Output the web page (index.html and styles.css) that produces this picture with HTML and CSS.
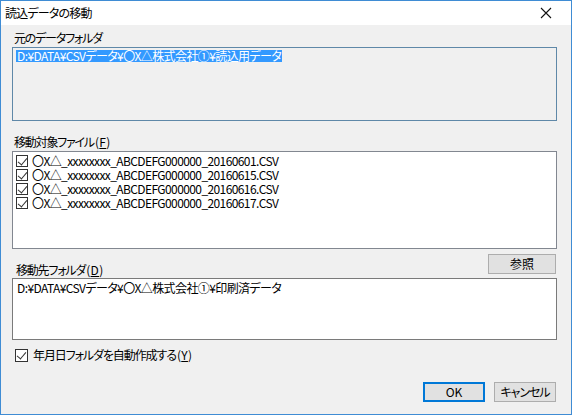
FILE: index.html
```html
<!DOCTYPE html>
<html lang="ja">
<head>
<meta charset="utf-8">
<title>読込データの移動</title>
<link rel="stylesheet" href="styles.css">
</head>
<body>
<div class="window">
  <div class="titlebar">
    <span class="title">読込データの移動</span>
    <span class="close">
      <svg width="12" height="12" viewBox="0 0 12 12"><path d="M1 1 L11 11 M11 1 L1 11" stroke="#111" stroke-width="1.1" fill="none"/></svg>
    </span>
  </div>
  <div class="content">
    <div class="label first">元のデータフォルダ</div>
    <div class="textbox source"><span class="selected">D:¥DATA¥CSVデータ¥〇X△株式会社①¥読込用データ</span></div>

    <div class="label files">移動対象ファイル<span class="key">(<u>F</u>)</span></div>
    <div class="listbox">
      <div class="item"><span class="check"></span><span class="name">〇X△_xxxxxxxx_ABCDEFG000000_20160601.CSV</span></div>
      <div class="item"><span class="check"></span><span class="name">〇X△_xxxxxxxx_ABCDEFG000000_20160615.CSV</span></div>
      <div class="item"><span class="check"></span><span class="name">〇X△_xxxxxxxx_ABCDEFG000000_20160616.CSV</span></div>
      <div class="item"><span class="check"></span><span class="name">〇X△_xxxxxxxx_ABCDEFG000000_20160617.CSV</span></div>
    </div>

    <div class="dest-row">
      <div class="label dest">移動先フォルダ<span class="key">(<u>D</u>)</span></div>
      <div class="button browse">参照</div>
    </div>
    <div class="textbox target">D:¥DATA¥CSVデータ¥〇X△株式会社①¥印刷済データ</div>

    <div class="option"><span class="check"></span><span>年月日フォルダを自動作成する<span class="key">(<u>Y</u>)</span></span></div>

    <div class="actions">
      <div class="button ok">OK</div>
      <div class="button cancel">キャンセル</div>
    </div>
  </div>
</div>
</body>
</html>
```

FILE: styles.css
```css
* { box-sizing: border-box; }

html, body {
  margin: 0;
  padding: 0;
  background: #f0f0f0;
}

body {
  font-family: "Noto Sans CJK JP", "Noto Sans", sans-serif;
  font-size: 12px;
  color: #000;
  font-feature-settings: "palt";
}

.window {
  width: 572px;
  height: 415px;
  border: 1px solid #3f8cd4;
  background: #f0f0f0;
  display: flex;
  flex-direction: column;
}

.titlebar {
  height: 24px;
  background: #fff;
  display: flex;
  align-items: center;
  justify-content: space-between;
  padding: 0 19px 0 4px;
}

.title {
  line-height: 14px;
  letter-spacing: -0.8px;
}

.close {
  display: flex;
}

.content {
  flex: 1;
  padding: 0 14px 0 11px;
  display: flex;
  flex-direction: column;
}

.label {
  line-height: 14px;
  padding-left: 2px;
  letter-spacing: -1.2px;
}

.key {
  letter-spacing: 0.3px;
  margin-left: 1px;
}

.key u {
  text-underline-offset: 1px;
}

.label.first { margin-top: 6px; }
.label.files { margin-top: 14px; margin-bottom: 2px; }

.textbox {
  border: 1px solid #7a7a7a;
  padding: 2px 4px;
  line-height: 12px;
  letter-spacing: -0.6px;
}

.textbox.source {
  height: 74px;
  margin-top: 2px;
  border-color: #5f88a8;
  background: #f0f0f0;
  padding-left: 3px;
}

.selected {
  background: #3399ff;
  color: #fff;
  display: inline-block;
  padding: 0 1px;
}

.textbox.target {
  height: 62px;
  margin-top: 4px;
  background: #fff;
  padding: 3px 4px;
}

.listbox {
  height: 98px;
  border: 1px solid #828790;
  background: #fff;
  padding: 2px 2px;
}

.item {
  display: flex;
  align-items: center;
  height: 14px;
  letter-spacing: -0.6px;
}

.name {
  display: block;
  height: 14px;
  line-height: 14px;
}

.check {
  width: 13px;
  height: 13px;
  border: 1px solid #333;
  background: #fff;
  position: relative;
  flex: none;
  margin-right: 4px;
}

.check::after {
  content: "";
  position: absolute;
  left: 3px;
  top: 0px;
  width: 4px;
  height: 8px;
  border-right: 1.2px solid #333;
  border-bottom: 1.2px solid #333;
  transform: rotate(40deg);
}

.item .check {
  width: 12px;
  height: 12px;
  margin-left: 1px;
}

.dest-row {
  display: flex;
  justify-content: space-between;
  align-items: flex-end;
  margin-top: 5px;
}

.label.dest {
  padding-left: 4px;
  margin-bottom: -3px;
}

.button {
  width: 62px;
  height: 20px;
  border: 1px solid #adadad;
  background: #e1e1e1;
  display: flex;
  align-items: center;
  justify-content: center;
  line-height: 14px;
}

.button.browse {
  width: 68px;
  margin-right: 1px;
}

.button.cancel {
  letter-spacing: -1px;
}

.option {
  display: flex;
  align-items: center;
  margin-top: 8px;
  padding-left: 3px;
  line-height: 14px;
  letter-spacing: -1.1px;
}

.option .check {
  margin-right: 5px;
}

.actions {
  display: flex;
  justify-content: flex-end;
  gap: 9px;
  margin-top: 20px;
  padding-right: 1px;
}

.button.ok {
  border: 2px solid #0078d7;
}
```
